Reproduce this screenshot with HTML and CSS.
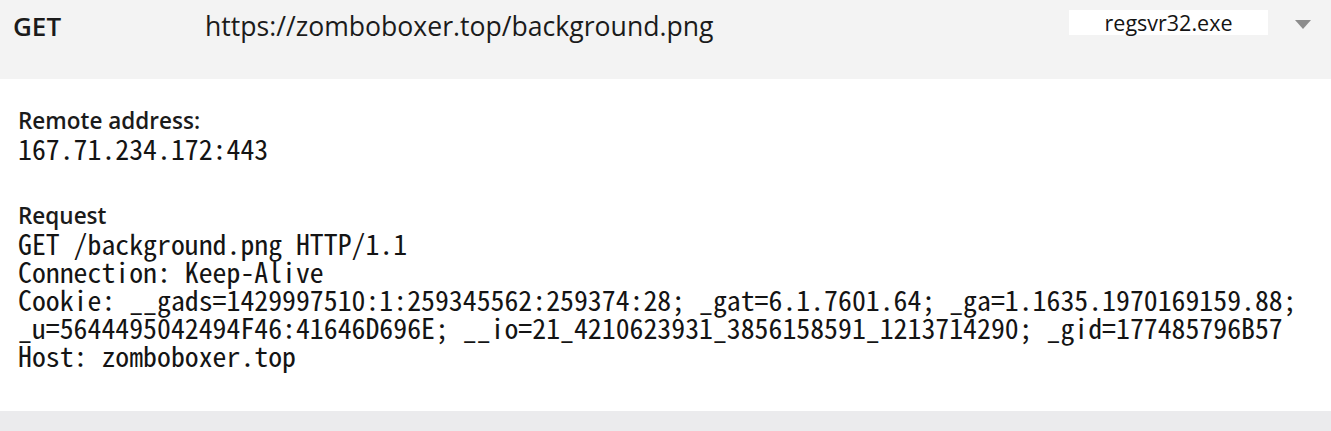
FILE: index.html
```html
<!DOCTYPE html>
<html>
<head>
<meta charset="utf-8">
<link rel="stylesheet" href="styles.css">
</head>
<body>
<div class="page">
  <div class="header">
    <div class="method">GET</div>
    <div class="url">https://zomboboxer.top/background.png</div>
    <div class="process">regsvr32.exe</div>
    <div class="caret"></div>
  </div>
  <div class="content">
    <div class="section">
      <div class="label">Remote address:</div>
      <div class="mono">167.71.234.172:443</div>
    </div>
    <div class="section">
      <div class="label">Request</div>
      <div class="mono">GET /background.png HTTP/1.1</div>
      <div class="mono">Connection: Keep-Alive</div>
      <div class="mono">Cookie: __gads=1429997510:1:259345562:259374:28; _gat=6.1.7601.64; _ga=1.1635.1970169159.88;</div>
      <div class="mono">_u=5644495042494F46:41646D696E; __io=21_4210623931_3856158591_1213714290; _gid=177485796B57</div>
      <div class="mono">Host: zomboboxer.top</div>
    </div>
  </div>
  <div class="footer"></div>
</div>
</body>
</html>
```
FILE: styles.css
```css
html, body {
  margin: 0;
  padding: 0;
  width: 1331px;
  height: 431px;
  overflow: hidden;
  background: #ffffff;
}
.page {
  display: flex;
  flex-direction: column;
  height: 431px;
  font-family: "Open Sans", "Noto Sans", sans-serif;
  color: #1b1b1b;
}
.header {
  height: 79px;
  background: #f3f3f3;
  display: flex;
  align-items: flex-start;
  box-sizing: border-box;
  padding-top: 8px;
}
.method {
  width: 192px;
  padding-left: 13px;
  font-size: 26px;
  font-weight: 600;
  line-height: 36px;
}
.url {
  flex: 1;
  font-size: 26.6px;
  line-height: 36px;
}
.process {
  width: 199px;
  height: 25px;
  margin-top: 2px;
  background: #ffffff;
  text-align: center;
  font-size: 21.5px;
  line-height: 25px;
  color: #141414;
}
.caret {
  width: 0;
  height: 0;
  margin: 12px 20px 0 27px;
  border-left: 8.5px solid transparent;
  border-right: 8.5px solid transparent;
  border-top: 9px solid #8c8c8c;
}
.content {
  height: 332px;
  box-sizing: border-box;
  padding: 28px 0 0 18px;
  display: flex;
  flex-direction: column;
  gap: 40px;
}
.label {
  font-size: 22.5px;
  font-weight: 600;
  line-height: 27px;
}
.mono {
  font-family: "Noto Sans Mono CJK JP", "Liberation Mono", monospace;
  font-size: 27.8px;
  line-height: 28px;
  white-space: pre;
  color: #141414;
}
.footer {
  flex: 1;
  background: #ebebed;
}
```
